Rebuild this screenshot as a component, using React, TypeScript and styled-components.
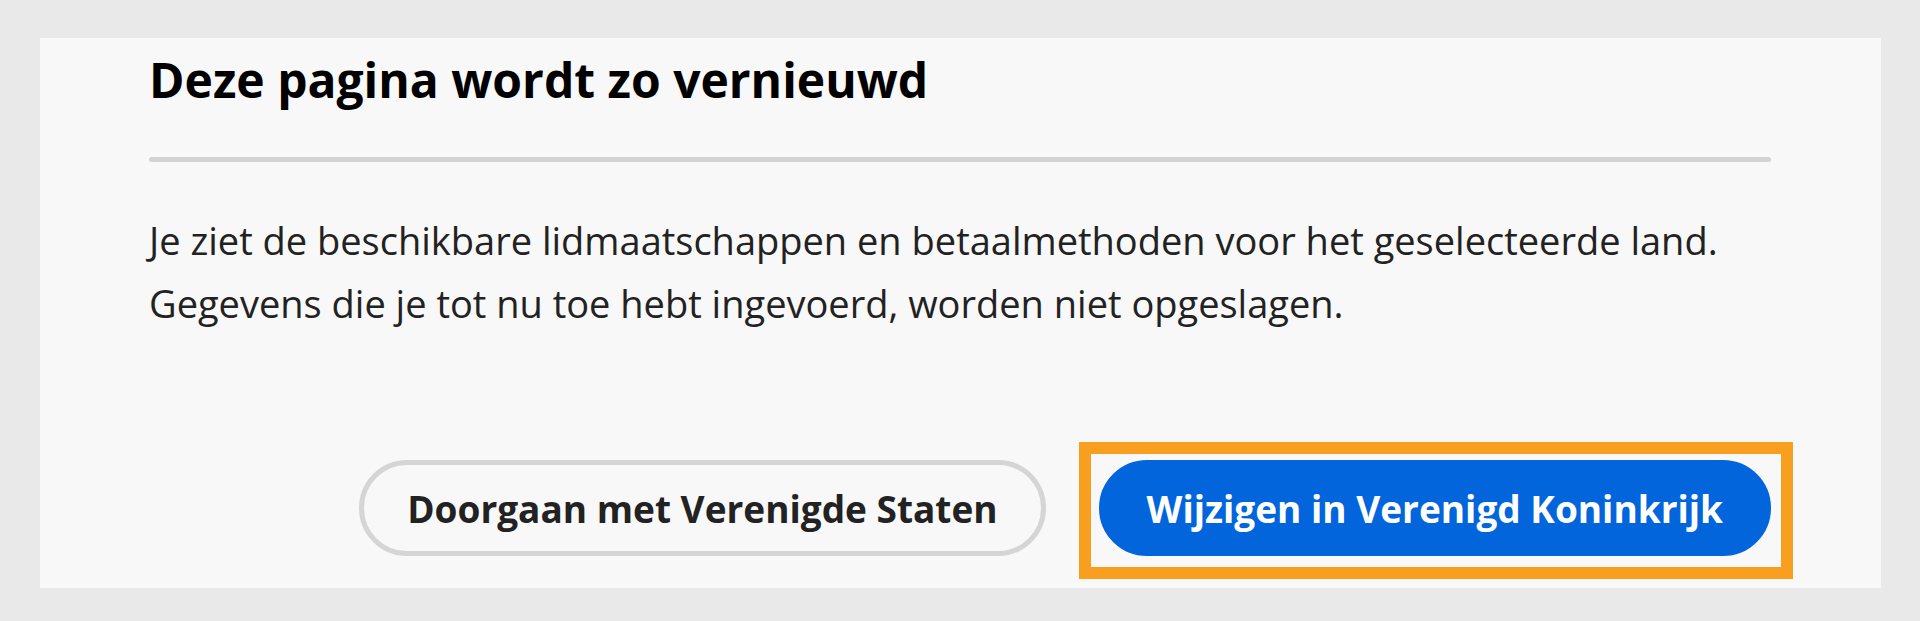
import styled, { createGlobalStyle } from "styled-components";

const GlobalStyle = createGlobalStyle`
  html, body {
    margin: 0;
    padding: 0;
    background-color: #e9e9e9;
  }

  body {
    font-family: "Open Sans", "Noto Sans", sans-serif;
  }
`;

export default function App() {
  return (
    <>
      <GlobalStyle />
      <S.Page>
        <S.Card>
          <S.Title>Deze pagina wordt zo vernieuwd</S.Title>
          <S.Divider />
          <S.Body>
            Je ziet de beschikbare lidmaatschappen en betaalmethoden voor het geselecteerde land.
            <br />
            Gegevens die je tot nu toe hebt ingevoerd, worden niet opgeslagen.
          </S.Body>
          <S.Actions>
            <S.Button variant="secondary">Doorgaan met Verenigde Staten</S.Button>
            <S.Highlight>
              <S.Button variant="primary">Wijzigen in Verenigd Koninkrijk</S.Button>
            </S.Highlight>
          </S.Actions>
        </S.Card>
      </S.Page>
    </>
  );
}

const S = {
  Page: styled.div`
    width: 1920px;
    height: 621px;

    padding: 38px 39px 0 40px;

    box-sizing: border-box;
  `,

  Card: styled.div`
    height: 550px;

    display: flex;
    flex-direction: column;

    padding: 13px 110px 0 109px;

    box-sizing: border-box;

    background-color: #f8f8f8;
  `,

  Title: styled.h1`
    margin: 0;

    font-size: 48px;
    line-height: 58px;
    font-weight: 700;

    color: #000000;
  `,

  Divider: styled.div`
    height: 5px;

    margin-top: 48px;

    border-radius: 3px;

    background-color: #d3d3d3;
  `,

  Body: styled.p`
    margin: 47px 0 0;

    font-size: 38px;
    line-height: 63px;

    color: #222222;
  `,

  Actions: styled.div`
    display: flex;
    justify-content: flex-end;
    align-items: center;
    gap: 53px;

    margin-top: 125px;
  `,

  Highlight: styled.span`
    position: relative;

    display: flex;

    &::after {
      content: "";

      position: absolute;
      top: -18px;
      right: -22px;
      bottom: -23px;
      left: -20px;

      border: 12px solid #f99f1f;

      pointer-events: none;
    }
  `,

  Button: styled.button<{ variant: "primary" | "secondary" }>`
    height: 96px;

    padding: 0 43px;

    border: 5px solid ${({ variant }) => (variant === "primary" ? "#0265dc" : "#d5d5d5")};
    border-radius: 48px;

    font-family: "Open Sans", "Noto Sans", sans-serif;
    font-size: 37px;
    font-weight: 700;

    white-space: nowrap;

    color: ${({ variant }) => (variant === "primary" ? "#ffffff" : "#222222")};
    background-color: ${({ variant }) => (variant === "primary" ? "#0265dc" : "transparent")};

    cursor: pointer;
  `,
};
